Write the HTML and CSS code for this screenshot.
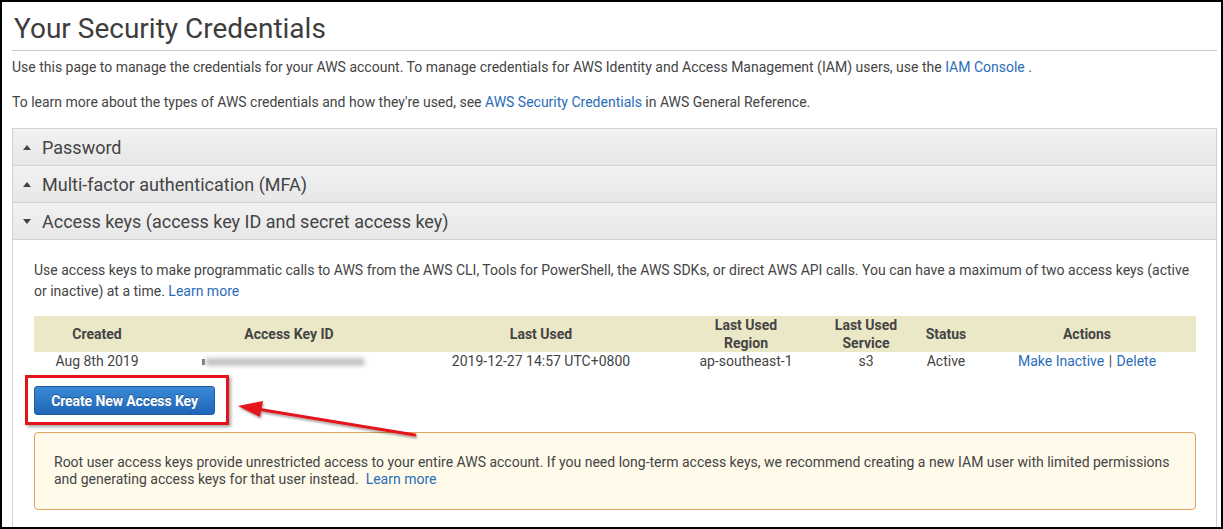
FILE: index.html
```html
<!DOCTYPE html>
<html lang="en">
<head>
<meta charset="utf-8">
<title>Your Security Credentials</title>
<link rel="stylesheet" href="styles.css">
</head>
<body>
<div class="frame">
  <div class="page">
    <h1 class="title">Your Security Credentials</h1>
    <p class="intro">Use this page to manage the credentials for your AWS account. To manage credentials for AWS Identity and Access Management (IAM) users, use the <a href="#">IAM Console</a> .</p>
    <p class="intro">To learn more about the types of AWS credentials and how they're used, see <a href="#">AWS Security Credentials</a> in AWS General Reference.</p>

    <div class="accordion">
      <div class="acc-head"><span class="caret up"></span>Password</div>
      <div class="acc-head"><span class="caret up"></span>Multi-factor authentication (MFA)</div>
      <div class="acc-head"><span class="caret down"></span>Access keys (access key ID and secret access key)</div>
      <div class="acc-body">
        <p class="desc">Use access keys to make programmatic calls to AWS from the AWS CLI, Tools for PowerShell, the AWS SDKs, or direct AWS API calls. You can have a maximum of two access keys (active or inactive) at a time. <a href="#">Learn more</a></p>
        <table class="keys">
          <colgroup>
            <col class="c1"><col class="c2"><col class="c3"><col class="c4"><col class="c5"><col class="c6"><col class="c7">
          </colgroup>
          <thead>
            <tr><th>Created</th><th>Access Key ID</th><th>Last Used</th><th>Last Used<br>Region</th><th>Last Used<br>Service</th><th>Status</th><th class="act">Actions</th></tr>
          </thead>
          <tbody>
            <tr>
              <td>Aug 8th 2019</td>
              <td class="keyid"><span class="blur-lead"></span><span class="blur"></span></td>
              <td>2019-12-27 14:57 UTC+0800</td>
              <td>ap-southeast-1</td>
              <td>s3</td>
              <td>Active</td>
              <td class="act"><a href="#">Make Inactive</a> <span class="sep">|</span> <a href="#">Delete</a></td>
            </tr>
          </tbody>
        </table>
        <div class="btn-row"><button class="btn-primary">Create New Access Key</button></div>
        <div class="warning">Root user access keys provide unrestricted access to your entire AWS account. If you need long-term access keys, we recommend creating a new IAM user with limited permissions and generating access keys for that user instead.&nbsp; <a href="#">Learn more</a></div>
      </div>
    </div>
  </div>

  <div class="highlight"></div>
  <svg class="arrow" width="200" height="50" viewBox="0 0 200 50" xmlns="http://www.w3.org/2000/svg">
    <defs>
      <filter id="sh" x="-20%" y="-50%" width="140%" height="200%">
        <feDropShadow dx="1" dy="2" stdDeviation="1.2" flood-color="#000" flood-opacity="0.35"/>
      </filter>
    </defs>
    <g filter="url(#sh)">
      <line x1="188" y1="39" x2="30" y2="13" stroke="#e3131b" stroke-width="3" stroke-linecap="round"/>
      <polygon points="11,10 36,5 33,21" fill="#e3131b"/>
    </g>
  </svg>
</div>
</body>
</html>
```
FILE: styles.css
```css
* { box-sizing: border-box; }
html, body { margin: 0; padding: 0; background: #fff; }
body {
  font-family: Roboto, "Liberation Sans", Arial, sans-serif;
  color: #444;
  font-size: 14px;
}
a { color: #2a6cb8; text-decoration: none; }

.frame {
  position: relative;
  width: 1223px;
  height: 529px;
  border: 2px solid #000;
  overflow: hidden;
}
.page {
  padding: 0 4px 0 10px;
}
.title {
  margin: 0;
  padding: 10px 0 4px 2px;
  font-size: 28px;
  font-weight: 400;
  line-height: 34px;
  color: #3d3d3d;
  border-bottom: 1px solid #c8c8c8;
}
.intro {
  margin: 7px 0 17px;
  line-height: 18px;
}
.accordion {
  border: 1px solid #d2d2d2;
  border-bottom: none;
  height: 600px;
}
.acc-head {
  display: flex;
  align-items: center;
  height: 37px;
  padding-left: 10px;
  font-size: 18px;
  color: #444;
  background: linear-gradient(#f2f2f2, #e7e7e7);
  border-bottom: 1px solid #d2d2d2;
}
.caret {
  width: 0; height: 0;
  margin-right: 11px;
  border-left: 4px solid transparent;
  border-right: 4px solid transparent;
}
.caret.up { border-bottom: 5px solid #444; }
.caret.down { border-top: 5px solid #444; }

.acc-body {
  padding: 20px 19px 0 21px;
}
.desc {
  margin: 0 0 14px;
  line-height: 21px;
}
.keys {
  width: 1162px;
  table-layout: fixed;
  border-collapse: collapse;
}
.c1 { width: 126px; } .c2 { width: 258px; } .c3 { width: 246px; }
.c4 { width: 164px; } .c5 { width: 76px; } .c6 { width: 84px; } .c7 { width: 208px; }
.keys th {
  background: #ebe8c8;
  font-weight: 700;
  height: 35px;
  line-height: 18px;
  padding: 0;
  text-align: center;
}
.keys td {
  height: 19px;
  padding: 0;
  line-height: 19px;
  text-align: center;
}
.keys .act { padding-right: 10px; }
.sep { color: #444; padding: 0 1px; }
.keyid { text-align: left !important; }
.blur-lead {
  display: inline-block;
  vertical-align: middle;
  margin-left: 42px;
  width: 3px; height: 6px;
  background: #777;
  filter: blur(0.6px);
}
.blur {
  display: inline-block;
  vertical-align: middle;
  width: 160px; height: 8px;
  background: #c4c4c4;
  border-radius: 4px;
  filter: blur(2px);
}
.btn-row {
  padding: 15px 0 17px;
}
.btn-primary {
  display: block;
  width: 181px;
  height: 29px;
  border: 1px solid #1d5ea3;
  border-radius: 3px;
  background: linear-gradient(#3a8ad6, #1f65b7);
  color: #fff;
  font-family: Roboto, "Liberation Sans", Arial, sans-serif;
  font-size: 14px;
  font-weight: 700;
  letter-spacing: -0.1px;
  text-shadow: 0 -1px 0 rgba(0,0,0,0.35);
  padding: 0;
}
.warning {
  width: 1162px;
  background: #fffaea;
  border: 1px solid #dea55d;
  border-radius: 4px;
  padding: 21px 20px 21px 19px;
  line-height: 17px;
}

.highlight {
  position: absolute;
  left: 23px;
  top: 373px;
  width: 204px;
  height: 50px;
  border: 3px solid #e3131b;
  box-shadow: 2px 2px 3px rgba(0,0,0,0.35);
}
.arrow {
  position: absolute;
  left: 225px;
  top: 394px;
}
```
